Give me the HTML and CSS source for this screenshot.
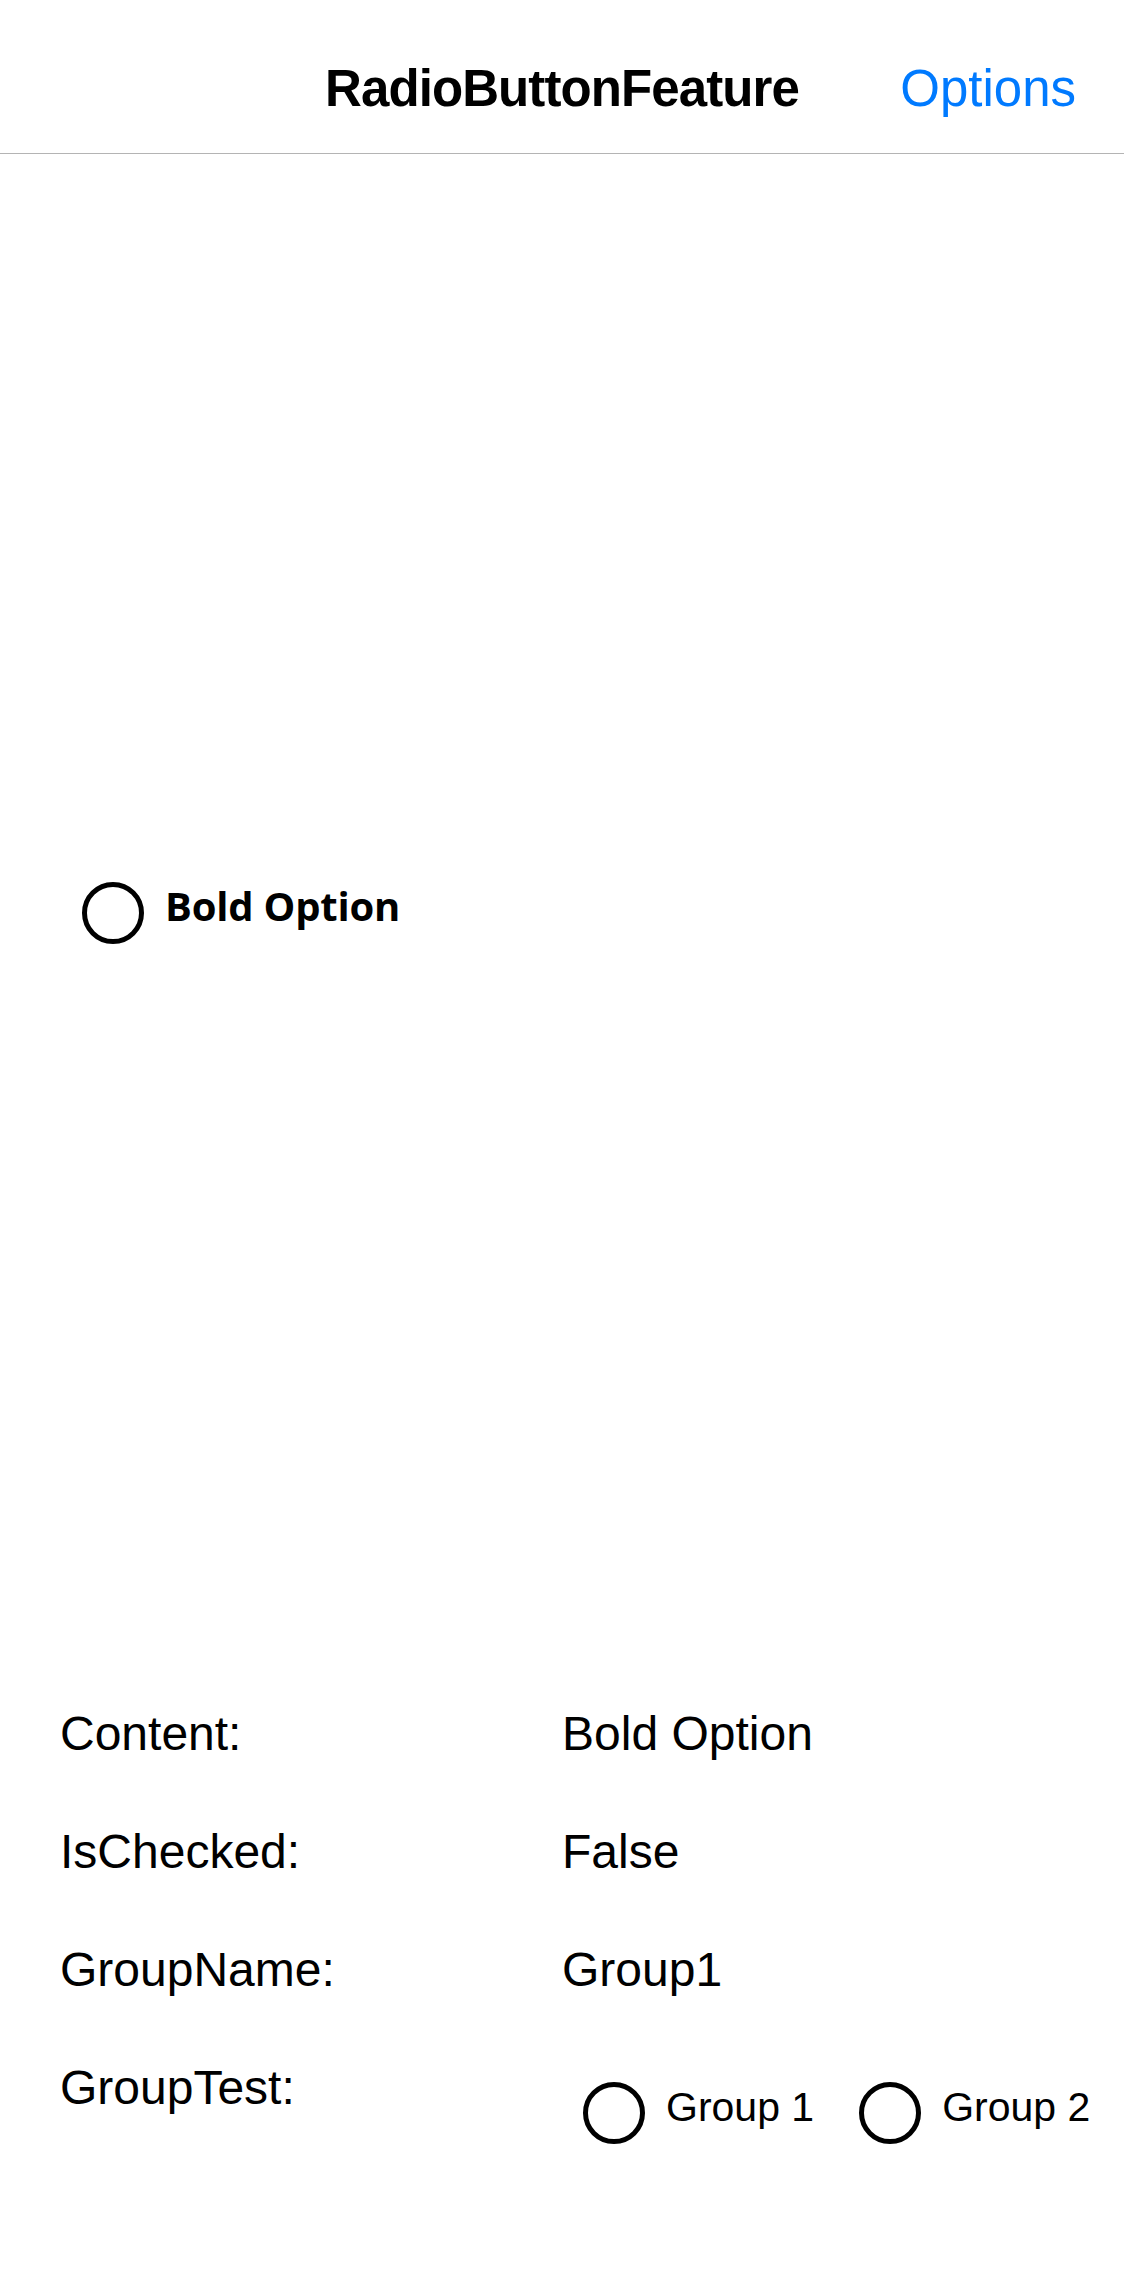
FILE: index.html
```html
<!DOCTYPE html>
<html>
<head>
<meta charset="utf-8">
<title>RadioButtonFeature</title>
<link rel="stylesheet" href="styles.css">
</head>
<body>
<header class="navbar">
  <div class="nav-title">RadioButtonFeature</div>
  <div class="nav-action">Options</div>
</header>
<main class="page">
  <section class="demo">
    <div class="radio radio-bold">
      <span class="radio-circle"></span>
      <span class="radio-label bold-label">Bold Option</span>
    </div>
  </section>
  <section class="props">
    <div class="prop-name">Content:</div>
    <div class="prop-value">Bold Option</div>
    <div class="prop-name">IsChecked:</div>
    <div class="prop-value">False</div>
    <div class="prop-name">GroupName:</div>
    <div class="prop-value">Group1</div>
    <div class="prop-name">GroupTest:</div>
    <div class="prop-value">
      <div class="group-list">
        <div class="radio">
          <span class="radio-circle"></span>
          <span class="radio-label group-label">Group 1</span>
        </div>
        <div class="radio">
          <span class="radio-circle"></span>
          <span class="radio-label group-label">Group 2</span>
        </div>
      </div>
    </div>
  </section>
</main>
</body>
</html>
```

FILE: styles.css
```css
html, body {
  margin: 0;
  padding: 0;
  background: #ffffff;
}

body {
  font-family: "Liberation Sans", Arial, sans-serif;
  color: #000000;
  width: 1124px;
  height: 2286px;
  overflow: hidden;
}

.navbar {
  position: relative;
  height: 154px;
  box-sizing: border-box;
  padding-top: 59px;
  border-bottom: 1px solid #b4b4b4;
  display: flex;
  justify-content: center;
}

.nav-title {
  font-size: 51px;
  line-height: 60px;
  font-weight: 700;
  letter-spacing: -0.9px;
}

.nav-action {
  position: absolute;
  right: 48px;
  top: 59px;
  font-size: 51px;
  line-height: 60px;
  color: #007aff;
}

.page {
  display: flex;
  flex-direction: column;
}

.demo {
  height: 1518px;
  display: flex;
  align-items: center;
  padding-left: 82px;
}

.radio {
  display: flex;
  align-items: flex-start;
  gap: 21px;
  flex: none;
  white-space: nowrap;
}

.radio-circle {
  width: 62px;
  height: 62px;
  box-sizing: border-box;
  border: 5px solid #000000;
  border-radius: 50%;
  flex: none;
}

.radio-label {
  white-space: nowrap;
}

.bold-label {
  font-family: "Open Sans", "Noto Sans", sans-serif;
  font-weight: 700;
  font-size: 40px;
  line-height: 50px;
  margin-top: -1px;
  letter-spacing: -0.2px;
}

.props {
  margin-top: 34px;
  display: grid;
  grid-template-columns: 502px 1fr;
  row-gap: 62px;
  padding-left: 60px;
  padding-right: 60px;
}

.prop-name, .prop-value {
  font-size: 48px;
  line-height: 56px;
  white-space: nowrap;
}

.group-list {
  display: flex;
  gap: 45px;
  margin-top: 22px;
  margin-left: 21px;
  width: max-content;
}

.group-label {
  font-size: 41px;
  line-height: 48px;
  margin-top: 1px;
}
```
